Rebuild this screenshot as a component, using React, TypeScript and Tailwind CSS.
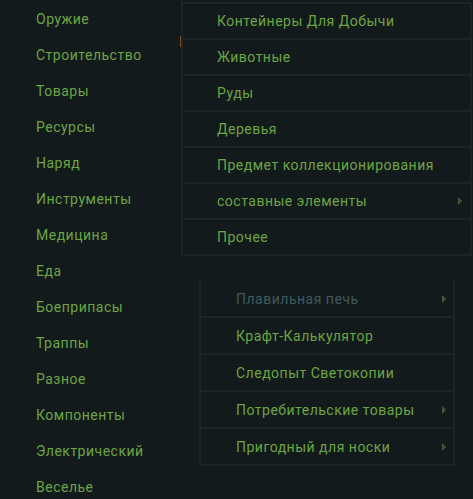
import React from "react";

const left = [
  "Оружие",
  "Строительство",
  "Товары",
  "Ресурсы",
  "Наряд",
  "Инструменты",
  "Медицина",
  "Еда",
  "Боеприпасы",
  "Траппы",
  "Разное",
  "Компоненты",
  "Электрический",
  "Веселье",
];

const sub1: { t: string; arrow?: boolean }[] = [
  { t: "Контейнеры Для Добычи" },
  { t: "Животные" },
  { t: "Руды" },
  { t: "Деревья" },
  { t: "Предмет коллекционирования" },
  { t: "составные элементы", arrow: true },
  { t: "Прочее" },
];

const sub2: { t: string; arrow?: boolean; dim?: boolean }[] = [
  { t: "Плавильная печь", arrow: true, dim: true },
  { t: "Крафт-Калькулятор" },
  { t: "Следопыт Светокопии" },
  { t: "Потребительские товары", arrow: true },
  { t: "Пригодный для носки", arrow: true },
];

function Arrow() {
  return (
    <svg width="4" height="8" viewBox="0 0 4 8" className="shrink-0">
      <path d="M0 0 L4 4 L0 8 Z" fill="#3d5a3c" />
    </svg>
  );
}

export default function App() {
  return (
    <div
      className="relative w-[473px] h-[499px] overflow-hidden bg-[#131a1b] text-[14px] tracking-[0.5px] text-[#6ca544]"
      style={{ fontFamily: "Roboto, 'Liberation Sans', sans-serif" }}
    >
      <div className="flex flex-col pt-[1px]">
        {left.map((t) => (
          <div key={t} className="h-[36px] flex items-center pl-[36px] leading-none">
            {t}
          </div>
        ))}
      </div>

      <div className="absolute left-[180px] top-[36px] w-[1px] h-[11px] bg-[#7a4a20]" />

      <div className="absolute left-[181px] top-[2px] w-[291px] border-t-2 border-l-2 border-r-2 border-[#1c2526] bg-[#131a1b]">
        {sub1.map((r) => (
          <div
            key={r.t}
            className="h-[36px] border-b-2 border-[#1c2526] flex items-center pl-[34px] pr-[8px] leading-none"
          >
            <span className="flex-1">{r.t}</span>
            {r.arrow && <Arrow />}
          </div>
        ))}
      </div>

      <div className="absolute left-[199px] top-[281px] w-[256px] border-l-2 border-r-2 border-[#1c2526] bg-[#131a1b]">
        {sub2.map((r) => (
          <div
            key={r.t}
            className="h-[37px] border-b-2 border-[#1c2526] flex items-center pl-[35px] pr-[7px] leading-none"
          >
            <span className={"flex-1 " + (r.dim ? "text-[#3d5a5c]" : "")}>{r.t}</span>
            {r.arrow && <Arrow />}
          </div>
        ))}
      </div>
    </div>
  );
}
